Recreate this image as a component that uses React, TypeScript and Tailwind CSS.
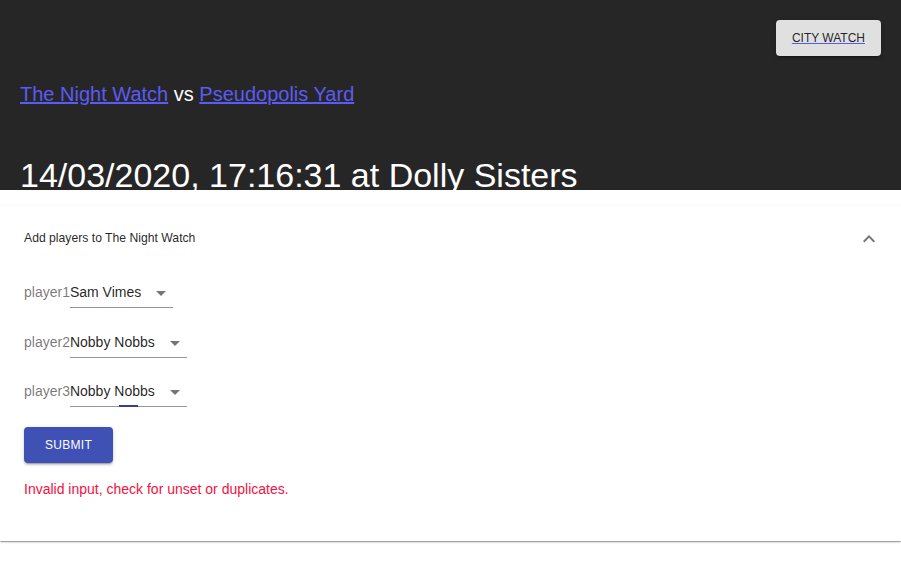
const players = [
    { label: "player1", value: "Sam Vimes", focus: false },
    { label: "player2", value: "Nobby Nobbs", focus: false },
    { label: "player3", value: "Nobby Nobbs", focus: true },
]

const ArrowDrop = () => (
    <svg viewBox="0 0 24 24" className="absolute right-0 top-[4px] w-6 h-6 fill-[rgba(0,0,0,0.54)]">
        <path d="M7 10l5 5 5-5z" />
    </svg>
)

const App = () => {
    return (
        <div className="min-h-[565px] bg-white font-['Liberation_Sans',Arial,sans-serif]">
            <header className="h-[190px] overflow-hidden bg-[#262626] px-5">
                <div className="flex justify-end pt-5">
                    <button className="h-9 px-4 rounded bg-[#e0e0e0] text-[12px] text-[rgba(0,0,0,0.87)] uppercase underline decoration-[#5a5af0] shadow-[0_3px_1px_-2px_rgba(0,0,0,0.2),0_2px_2px_0_rgba(0,0,0,0.14),0_1px_5px_0_rgba(0,0,0,0.12)]">
                        City Watch
                    </button>
                </div>
                <p className="mt-[27px] text-[20px] leading-[23px] text-white">
                    <a href="#" className="text-[#5b5bf5] underline">The Night Watch</a>
                    {" vs "}
                    <a href="#" className="text-[#5b5bf5] underline">Pseudopolis Yard</a>
                </p>
                <h4 className="mt-[48px] text-[34px] leading-[42px] text-white whitespace-nowrap">
                    14/03/2020, 17:16:31 at Dolly Sisters
                </h4>
            </header>

            <div className="mt-[16px] bg-white shadow-[0_2px_1px_-1px_rgba(0,0,0,0.2),0_1px_1px_0_rgba(0,0,0,0.14),0_1px_3px_0_rgba(0,0,0,0.12)]">
                <div className="flex h-16 items-center justify-between pl-6 pr-5 pt-px">
                    <span className="text-[12.2px] text-[rgba(0,0,0,0.87)]">Add players to The Night Watch</span>
                    <svg viewBox="0 0 24 24" className="w-6 h-6 rotate-180 fill-[rgba(0,0,0,0.54)]">
                        <path d="M16.59 8.59L12 13.17 7.41 8.59 6 10l6 6 6-6z" />
                    </svg>
                </div>

                <div className="flex flex-col px-6 pt-[7px] pb-[42px]">
                    <div className="flex flex-col gap-[18.5px]">
                        {players.map((p) => (
                            <div key={p.label} className="flex items-baseline text-[14px]">
                                <span className="text-[rgba(0,0,0,0.54)]">{p.label}</span>
                                <div className="relative border-b border-[rgba(0,0,0,0.42)] pt-[6px] pb-[5px] pr-8 leading-[19px] text-[rgba(0,0,0,0.87)]">
                                    {p.value}
                                    <ArrowDrop />
                                    {p.focus && (
                                        <span className="absolute left-[49px] bottom-[-1px] h-[2px] w-[19px] bg-[#303f9f]" />
                                    )}
                                </div>
                            </div>
                        ))}
                    </div>

                    <div className="mt-[20px]">
                        <button className="h-9 px-[21px] rounded bg-[#3f51b5] text-[12px] tracking-[0.3px] text-white uppercase shadow-[0_3px_1px_-2px_rgba(0,0,0,0.2),0_2px_2px_0_rgba(0,0,0,0.14),0_1px_5px_0_rgba(0,0,0,0.12)]">
                            Submit
                        </button>
                    </div>

                    <p className="mt-4 text-[14px] leading-[20px] text-[#f5103f]">
                        Invalid input, check for unset or duplicates.
                    </p>
                </div>
            </div>
        </div>
    )
}

export default App
